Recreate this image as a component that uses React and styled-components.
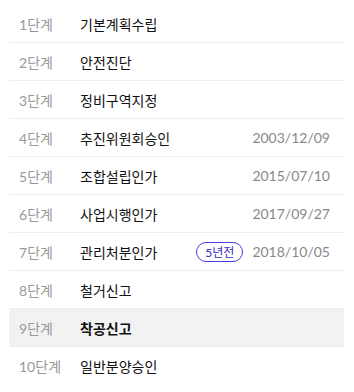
import React from 'react';
import styled, { createGlobalStyle } from 'styled-components';

const GlobalStyle = createGlobalStyle`
  body {
    margin: 0;
    background: #fff;
    font-family: Lato, "Noto Sans CJK KR", sans-serif;
  }
`;

const List = styled.ul`
  list-style: none;
  margin: 0;
  padding: 5px 10px 0 9px;
`;

const Row = styled.li`
  display: flex;
  align-items: center;
  height: 37px;
  padding: 0 14px 0 10px;
  border-bottom: 1px solid ${props => (props.$last ? 'transparent' : '#eeeeee')};
  background: ${props => (props.$active ? '#f2f2f2' : 'transparent')};
  font-size: 14px;
`;

const Step = styled.span`
  width: 61px;
  flex-shrink: 0;
  color: #999999;
`;

const Name = styled.span`
  flex: 1;
  color: #111111;
  font-weight: ${props => (props.$active ? 700 : 400)};
`;

const Badge = styled.span`
  display: inline-flex;
  align-items: center;
  justify-content: center;
  box-sizing: border-box;
  height: 20px;
  padding: 0 8px;
  margin-right: 9px;
  border: 1.5px solid #4a3ee6;
  border-radius: 10px;
  color: #3529c4;
  font-size: 12px;
`;

const Date = styled.span`
  color: #888888;
`;

const steps = [
  { name: '기본계획수립' },
  { name: '안전진단' },
  { name: '정비구역지정' },
  { name: '추진위원회승인', date: '2003/12/09' },
  { name: '조합설립인가', date: '2015/07/10' },
  { name: '사업시행인가', date: '2017/09/27' },
  { name: '관리처분인가', date: '2018/10/05', badge: '5년전' },
  { name: '철거신고' },
  { name: '착공신고', active: true },
  { name: '일반분양승인' },
];

const App = () => (
  <>
    <GlobalStyle />
    <List>
      {steps.map((s, i) => (
        <Row key={i} $active={s.active} $last={i === steps.length - 1}>
          <Step>{i + 1}단계</Step>
          <Name $active={s.active}>{s.name}</Name>
          {s.badge && <Badge>{s.badge}</Badge>}
          {s.date && <Date>{s.date}</Date>}
        </Row>
      ))}
    </List>
  </>
);

export default App;
